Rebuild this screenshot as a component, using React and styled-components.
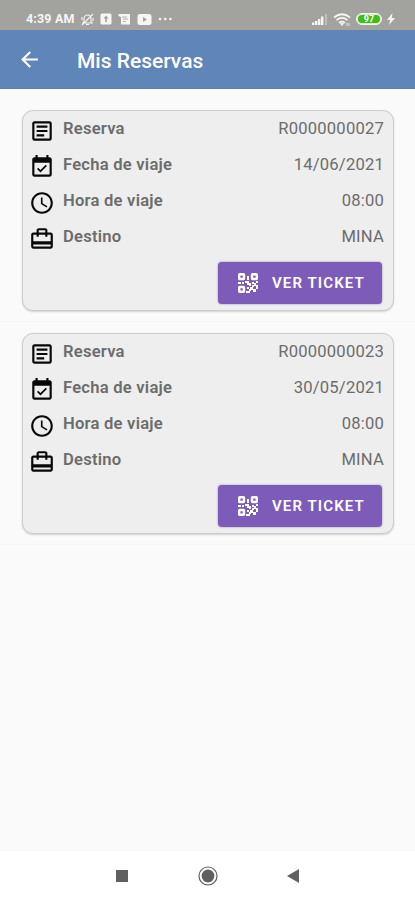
import React from "react";
import styled, { createGlobalStyle } from "styled-components";

const GlobalStyle = createGlobalStyle`
  * { box-sizing: border-box; }
  body { margin: 0; background: #fafafa; font-family: Roboto, "Liberation Sans", sans-serif; }
`;

const Screen = styled.div`
  height: 900px; display: flex; flex-direction: column; background: #fafafa; overflow: hidden;
`;
const StatusBar = styled.div`
  height: 30px; flex: none; display: flex; align-items: center; justify-content: space-between;
  padding: 8px 20px 0 26px; background: #a2a29f; color: #f6f6f4;
`;
const StatusGroup = styled.div`
  display: flex; align-items: center; gap: ${(p) => p.$gap}px;
`;
const Clock = styled.span`
  font-size: 12.5px; font-weight: 700; line-height: 14px; letter-spacing: 0.15px; white-space: nowrap;
`;
const Battery = styled.span`
  width: 26px; height: 12px; border: 1.5px solid #f3f5ef; border-radius: 6px; padding: 1px;
  display: grid; background: #d9e8d0;
`;
const Charge = styled.span`
  display: grid; place-items: center; border-radius: 4px; background: #42bd16;
  color: #fff; font-size: 9px; font-weight: 700; line-height: 8px;
`;

const TopBar = styled.header`
  height: 59px; flex: none; display: flex; align-items: center; gap: 35px; padding: 1px 17px 0;
  background: #6085b9; border-bottom: 1px solid #587dae; color: #fff;
`;
const BackBtn = styled.button`
  width: 25px; height: 25px; padding: 0; border: 0; background: transparent; color: inherit; display: grid; place-items: center;
  margin-top: -1px;
`;
const Title = styled.h1`
  margin: 3px 0 0; font-size: 21px; font-weight: 500; line-height: 26px;
`;

const List = styled.main`
  flex: 1; padding-top: 10px;
`;
const Item = styled.div`
  height: 223px; padding: 11px 21px 0 22px; border-bottom: 1px solid #f5f5f5;
`;
const Card = styled.section`
  height: 201px; padding: 0 9px 0 6px; border: 1.5px solid #cdcdcd; border-radius: 11px;
  background: #eee; box-shadow: 0 1px 2px rgba(0, 0, 0, 0.16);
`;
const Row = styled.div`
  height: 36px; display: grid; grid-template-columns: 26px auto 1fr; column-gap: 8px; color: #6c6c6c;
  font-size: 16.6px; line-height: 34px;
`;
const RowIcon = styled.span`
  height: 26px; margin-top: 7px; color: #080808;
`;
const Label = styled.span`
  font-weight: 600; font-size: 16.6px; letter-spacing: 0.23px; padding-top: 1px;
`;
const Value = styled.span`
  text-align: right; letter-spacing: 0.2px; padding-top: 1px;
`;
const Actions = styled.div`
  display: flex; justify-content: flex-end; padding: 7px 2px 0 0;
`;
const TicketBtn = styled.button`
  width: 164px; height: 42px; display: flex; align-items: center; gap: 14px; padding: 0 0 0 20px;
  border: 0; border-radius: 4px; background: #7d5cb9; color: #fff; box-shadow: 0 0 2px rgba(60, 30, 110, 0.5);
  font: 600 15px/20px Roboto, "Liberation Sans", sans-serif; letter-spacing: 1.1px; white-space: nowrap;
`;

const NavBar = styled.nav`
  height: 49px; flex: none; display: flex; justify-content: center; align-items: center; gap: 65.5px;
  background: #fff; color: #606060;
`;

const Svg = styled.svg`
  display: block; flex: none;
`;

function Icon({ d, size = 26 }) {
  return (
    <Svg width={size} height={size} viewBox="0 0 24 24" fill="currentColor">
      <path d={d} />
    </Svg>
  );
}

const icons = {
  back: "M20 11H7.83l5.59-5.59L12 4l-8 8 8 8 1.41-1.41L7.83 13H20v-2z",
  article: "M19 5v14H5V5h14m0-2H5c-1.1 0-2 .9-2 2v14c0 1.1.9 2 2 2h14c1.1 0 2-.9 2-2V5c0-1.1-.9-2-2-2zM14 17H7v-2h7v2zm3-4H7v-2h10v2zm0-4H7V7h10v2z",
  date: "M16.53 11.06L15.47 10l-4.88 4.88-2.12-2.12-1.06 1.06L10.59 17l5.94-5.94zM19 3h-1V1h-2v2H8V1H6v2H5c-1.11 0-1.99.9-1.99 2L3 19c0 1.1.89 2 2 2h14c1.1 0 2-.9 2-2V5c0-1.1-.9-2-2-2zm0 16H5V8h14v11z",
  time: "M11.99 2C6.47 2 2 6.48 2 12s4.47 10 9.99 10C17.52 22 22 17.52 22 12S17.52 2 11.99 2zM12 20c-4.42 0-8-3.58-8-8s3.58-8 8-8 8 3.58 8 8-3.58 8-8 8zm.5-13H11v6l5.25 3.15.75-1.23-4.5-2.67z",
  travel: "M20 6h-3V4c0-1.11-.89-2-2-2H9c-1.11 0-2 .89-2 2v2H4c-1.11 0-2 .89-2 2v11c0 1.11.89 2 2 2h16c1.11 0 2-.89 2-2V8c0-1.11-.89-2-2-2zM9 4h6v2H9V4zm11 15H4v-2h16v2zm0-5H4V8h3v2h2V8h6v2h2V8h3v6z",
};

function QrIcon() {
  return (
    <Svg width="20" height="20" viewBox="0 0 20 20" fill="currentColor">
      <g fill="none" stroke="currentColor" strokeWidth="2.4">
        <rect x="1.2" y="1.2" width="4.8" height="4.8" rx=".5" />
        <rect x="14" y="1.2" width="4.8" height="4.8" rx=".5" />
        <rect x="1.2" y="14" width="4.8" height="4.8" rx=".5" />
      </g>
      <path d="M9 3h2v4H9zM0 9h3v2H0zM4 9h2v2H4zM7 8h4v2h2v3h-2v-1H9v-2H7zM14 9h2v2h-2zM18 8h2v2h-2zM16 10h2v3h-2zM14 12h2v2h-2zM18 12h2v4h-2zM12 14h3v3h-2v1h-2v-2h1zM15 16h3v3h-3zM9 14h2v2H9zM8 18h4v2H8z" />
    </Svg>
  );
}

function MuteIcon() {
  return (
    <Svg width="13" height="13" viewBox="0 0 13 13" fill="none" stroke="currentColor" strokeWidth="1.1">
      <path d="M3 9V6c0-2.5 1.3-4 3.5-4S10 3.5 10 6v3l1 1H2l1-1zM5 11.5h3M1 12 12 1M1 4v3M12 5v3" />
    </Svg>
  );
}

const reservas = [
  { codigo: "R0000000027", fecha: "14/06/2021", hora: "08:00", destino: "MINA" },
  { codigo: "R0000000023", fecha: "30/05/2021", hora: "08:00", destino: "MINA" },
];

function Reserva({ reserva }) {
  const rows = [
    ["article", "Reserva", reserva.codigo],
    ["date", "Fecha de viaje", reserva.fecha],
    ["time", "Hora de viaje", reserva.hora],
    ["travel", "Destino", reserva.destino],
  ];
  return (
    <Item>
      <Card>
        {rows.map(([icon, label, value]) => (
          <Row key={icon}>
            <RowIcon><Icon d={icons[icon]} /></RowIcon>
            <Label>{label}</Label>
            <Value>{value}</Value>
          </Row>
        ))}
        <Actions>
          <TicketBtn><QrIcon />VER TICKET</TicketBtn>
        </Actions>
      </Card>
    </Item>
  );
}

export default function App() {
  return (
    <Screen>
      <GlobalStyle />
      <StatusBar>
        <StatusGroup $gap={6}>
          <Clock>4:39 AM</Clock>
          <MuteIcon />
          <Svg width="12" height="12" viewBox="0 0 12 12">
            <rect x=".5" y=".5" width="11" height="11" rx="1.5" fill="currentColor" />
            <path d="M6 2.5 3.5 5.5h1.7V9h1.6V5.5h1.7z" fill="#a2a29f" />
          </Svg>
          <Svg width="13" height="12" viewBox="0 0 13 12">
            <path d="M.5 1H12v10.5H3V4L.5 3z" fill="currentColor" />
            <path d="M4 4h5M5 6h5M5 8.5h3" stroke="#a2a29f" strokeWidth=".8" />
          </Svg>
          <Svg width="15" height="11" viewBox="0 0 15 11">
            <rect x=".5" width="14" height="11" rx="2.5" fill="currentColor" />
            <path d="m6 3 4 2.5L6 8z" fill="#a2a29f" />
          </Svg>
          <Svg width="15" height="4" viewBox="0 0 15 4" fill="currentColor">
            <circle cx="2" cy="2" r="1.3" />
            <circle cx="7.2" cy="2" r="1.3" />
            <circle cx="12.4" cy="2" r="1.3" />
          </Svg>
        </StatusGroup>
        <StatusGroup $gap={5}>
          <Svg width="16" height="12" viewBox="0 0 16 12" fill="currentColor">
            <path d="M0 9.5h2.4V12H0zM3 8h2.4v4H3zM6 6h2.4v6H6zM9 3.5h2.4V12H9z" />
            <path d="M13 1h2v11h-2z" opacity=".35" />
          </Svg>
          <Svg width="18" height="13" viewBox="0 0 18 13" fill="none" stroke="currentColor" strokeWidth="1.7">
            <path d="M1 4.5q8-6.5 16 0M3.5 7.2q5.5-4.5 11 0M6 9.8q3-2.4 6 0" />
            <path d="M7.5 10.5h3L9 12.5zM14 10v3M16 10v3" fill="currentColor" strokeWidth=".8" />
          </Svg>
          <Battery><Charge>97</Charge></Battery>
          <Svg width="8" height="12" viewBox="0 0 8 12" fill="currentColor">
            <path d="M5.5 0 0 7h3.2L2 12l6-7H4.7z" />
          </Svg>
        </StatusGroup>
      </StatusBar>
      <TopBar>
        <BackBtn aria-label="Volver"><Icon d={icons.back} size={25} /></BackBtn>
        <Title>Mis Reservas</Title>
      </TopBar>
      <List>
        {reservas.map((r) => (
          <Reserva key={r.codigo} reserva={r} />
        ))}
      </List>
      <NavBar>
        <Svg width="20" height="20" viewBox="0 0 20 20" fill="currentColor">
          <rect x="4" y="4" width="12" height="12" />
        </Svg>
        <Svg width="20" height="20" viewBox="0 0 20 20" fill="currentColor">
          <circle cx="10" cy="10" r="9" fill="none" stroke="currentColor" strokeWidth="1.2" />
          <circle cx="10" cy="10" r="6.4" />
        </Svg>
        <Svg width="20" height="20" viewBox="0 0 20 20" fill="currentColor">
          <path d="M16 3v14L4 10z" />
        </Svg>
      </NavBar>
    </Screen>
  );
}
